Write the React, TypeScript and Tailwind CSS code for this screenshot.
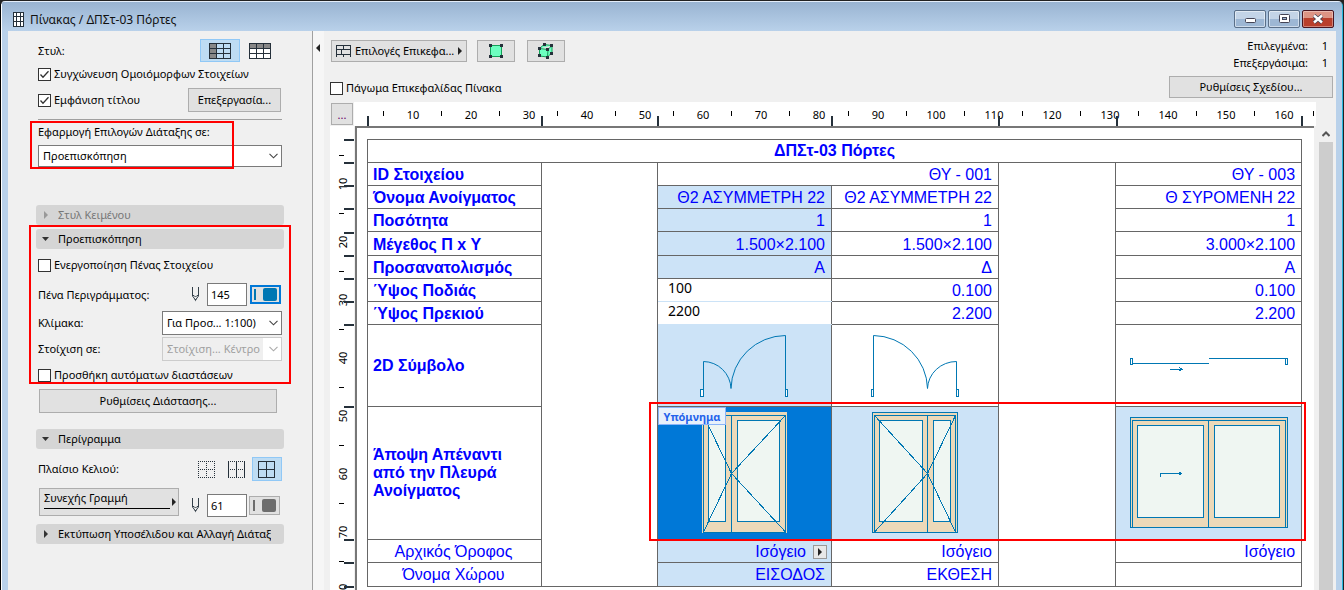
import React, { useState } from 'react';

const STROKE = '#0077b3';

const H_TICKS = [368, 542, 658, 832, 999, 1117, 1302];
const V_TICKS = [140, 163, 186, 209, 233, 256, 279, 302, 325, 407, 540, 563, 587];

const CheckBox: React.FC<{ label: string; initial?: boolean }> = ({ label, initial = false }) => {
  const [checked, setChecked] = useState(initial);
  return (
    <label className="flex items-center gap-[3px] whitespace-nowrap">
      <span className="grid size-[13px] shrink-0">
        <input
          type="checkbox"
          checked={checked}
          onChange={() => setChecked(!checked)}
          className="peer [grid-area:1/1] appearance-none size-[13px] border border-[#333] bg-white"
        />
        <svg viewBox="0 0 13 13" className="[grid-area:1/1] size-[13px] pointer-events-none invisible peer-checked:visible">
          <path d="M2.5 6.5 L5 9.2 L10.5 3.2" fill="none" stroke="#333" strokeWidth="1.3" />
        </svg>
      </span>
      {label}
    </label>
  );
};

const DropDown: React.FC<{ id: string; value: string; className: string; disabled?: boolean }> = ({ id, value, className, disabled }) => (
  <div className={`grid ${className}`}>
    <select
      id={id}
      disabled={disabled}
      className="[grid-area:1/1] appearance-none w-full h-full border border-[#7a7a7a] bg-white pl-1 pr-5 text-black disabled:border-[#ccc] disabled:bg-[linear-gradient(90deg,#efefef_100px,#fff_100px)] disabled:text-[#a0a0a0] disabled:opacity-100"
    >
      <option>{value}</option>
    </select>
    <svg viewBox="0 0 9 6" className="[grid-area:1/1] w-[9px] h-1.5 mr-1 self-center justify-self-end pointer-events-none">
      <path d="M0.5 0.8 L4.5 4.8 L8.5 0.8" fill="none" stroke={disabled ? '#aaa' : '#444'} strokeWidth="1.1" />
    </svg>
  </div>
);

const SectionHeader: React.FC<{ title: string; open?: boolean; disabled?: boolean }> = ({ title, open, disabled }) => (
  <button
    disabled={disabled}
    className="flex items-center w-full h-5 pl-1.5 pr-3 rounded-[3px] bg-[#d5d5d5] text-left disabled:text-[#777]"
  >
    <svg viewBox="0 0 8 8" className="size-2 shrink-0 mr-2">
      <path d={open ? 'M0 2 H7 L3.5 6 Z' : 'M2 0 L6 4 L2 8 Z'} fill={disabled ? '#999' : '#333'} />
    </svg>
    <span className="overflow-hidden whitespace-nowrap">{title}</span>
  </button>
);

const PenIcon = () => (
  <svg viewBox="0 0 9 15" className="w-[9px] h-[15px] mr-[7px]">
    <path d="M1.5 0 V9 L4.5 13 L7.5 9 V0 M1.5 8.5 H3 L4.5 10 L6 8.5 H7.5" fill="none" stroke="#333f48" />
    <path d="M3.5 12 H5.5 L4.5 14.5 Z" fill="#333f48" />
  </svg>
);

const StyleIcon: React.FC<{ left?: boolean }> = ({ left }) => (
  <svg viewBox="0 0 22 16" className="w-[22px] h-4" shapeRendering="crispEdges">
    <rect x="0.5" y="0.5" width="21" height="15" fill={left ? 'none' : '#fff'} />
    {left ? <rect width="7" height="16" fill="#888" /> : <rect width="22" height="5" fill="#888" />}
    <path d="M0.5 0.5 H21.5 V15.5 H0.5 Z M7.5 0 V16 M14.5 0 V16 M0 5.5 H22 M0 10.5 H22" fill="none" stroke="#25303a" />
  </svg>
);

const FrameIcon: React.FC<{ kind: 'none' | 'vertical' | 'full' }> = ({ kind }) => (
  <svg viewBox="0 0 17 17" className="size-[17px]" shapeRendering="crispEdges" fill="none" stroke="#25303a">
    <path
      d="M0 0.5 H17 M0 8.5 H17 M0 16.5 H17"
      strokeDasharray={kind === 'full' ? undefined : '1 1'}
    />
    <path d="M0.5 0 V17 M8.5 0 V17 M16.5 0 V17" strokeDasharray={kind === 'none' ? '1 1' : undefined} />
  </svg>
);

const Swatch: React.FC<{ color: string }> = ({ color }) => (
  <svg viewBox="0 0 23 13" className="w-[23px] h-[13px]">
    <rect x="0" y="1" width="2" height="11" fill={color} />
    <rect x="9" y="0" width="14" height="13" rx="2" fill={color} />
  </svg>
);

const Sidebar = () => (
  <aside className="w-[305px] shrink-0 border-r border-[#a0a0a0] px-7 pt-2">
    <div className="px-0.5">
      <div className="flex items-center h-[23px]">
        <span className="mr-auto">Στυλ:</span>
        <button aria-label="Κεφαλίδα αριστερά" className="w-10 h-[23px] grid place-items-center border border-[#90c8f6] bg-[#bedcf3]">
          <StyleIcon left />
        </button>
        <button aria-label="Κεφαλίδα επάνω" className="w-10 h-[23px] mr-0.5 grid place-items-center">
          <StyleIcon />
        </button>
      </div>
      <div className="flex items-center h-6">
        <CheckBox label="Συγχώνευση Ομοιόμορφων Στοιχείων" initial />
      </div>
      <div className="flex items-center justify-between h-7 pr-px">
        <CheckBox label="Εμφάνιση τίτλου" initial />
        <button className="w-[93px] h-6 border border-[#adadad] bg-[#e1e1e1]">Επεξεργασία...</button>
      </div>
      <hr className="mt-[5px] border-[#a0a0a0]" />
      <div className="relative">
        <label htmlFor="apply" className="flex items-center h-[25px] pb-0.5">Εφαρμογή Επιλογών Διάταξης σε:</label>
        <DropDown id="apply" value="Προεπισκόπηση" className="h-[22px]" />
        <div className="absolute -left-2 top-px w-[204px] h-12 border-2 border-[#f00] pointer-events-none" />
      </div>
    </div>

    <div className="mt-[38px]">
      <SectionHeader title="Στυλ Κειμένου" disabled />
    </div>
    <div className="relative mt-1">
      <SectionHeader title="Προεπισκόπηση" open />
      <div className="px-0.5">
        <div className="flex items-center h-8">
          <CheckBox label="Ενεργοποίηση Πένας Στοιχείου" />
        </div>
        <div className="flex items-center h-[27px] pr-px">
          <label htmlFor="pen" className="mr-auto">Πένα Περιγράμματος:</label>
          <PenIcon />
          <input id="pen" defaultValue="145" className="w-10 h-[23px] mr-[3px] pl-[3px] border border-[#7a7a7a] bg-white" />
          <button aria-label="Χρώμα πένας" className="w-[31px] h-[19px] grid place-items-center border-2 border-[#0078d7] bg-[#e1e1e1]">
            <Swatch color="#0077b3" />
          </button>
        </div>
        <div className="flex items-center justify-between h-[29px]">
          <label htmlFor="scale">Κλίμακα:</label>
          <DropDown id="scale" value="Για Προσ... 1:100)" className="w-[120px] h-6" />
        </div>
        <div className="flex items-center justify-between h-6">
          <label htmlFor="align">Στοίχιση σε:</label>
          <DropDown id="align" value="Στοίχιση... Κέντρο" className="w-[120px] h-6" disabled />
        </div>
        <div className="flex items-center h-7">
          <CheckBox label="Προσθήκη αυτόματων διαστάσεων" />
        </div>
      </div>
      <div className="absolute -left-[7px] -top-1 w-[262px] h-[159px] border-2 border-[#f00] pointer-events-none" />
    </div>
    <button className="block ml-[3px] w-[238px] h-6 border border-[#adadad] bg-[#e1e1e1]">Ρυθμίσεις Διάστασης...</button>

    <div className="mt-4">
      <SectionHeader title="Περίγραμμα" open />
    </div>
    <div className="flex items-center h-6 mt-2 px-0.5">
      <span className="mr-auto">Πλαίσιο Κελιού:</span>
      <button aria-label="Χωρίς πλαίσιο" className="w-[30px] h-6 pr-px grid place-items-center"><FrameIcon kind="none" /></button>
      <button aria-label="Κάθετο πλαίσιο" className="w-[30px] h-6 pr-px grid place-items-center"><FrameIcon kind="vertical" /></button>
      <button aria-label="Πλήρες πλαίσιο" className="w-[30px] h-6 pr-px grid place-items-center border border-[#90c8f6] bg-[#bedcf3]"><FrameIcon kind="full" /></button>
    </div>
    <div className="flex items-end h-[29px] mt-[7px] mb-[7px] pl-[3px] pr-1">
      <button className="flex items-center self-start w-[140px] h-7 mr-auto pl-1 pr-0.5 border border-[#adadad] bg-[#e1e1e1]">
        <span className="flex-1 border-b border-black text-left h-[18px] mb-[5px] leading-[14px]">Συνεχής Γραμμή</span>
        <svg viewBox="0 0 4 8" className="w-1 h-2 ml-0.5"><path d="M0 0 L4 4 L0 8 Z" fill="#222" /></svg>
      </button>
      <div className="flex items-center">
        <PenIcon />
        <input aria-label="Πένα πλαισίου" defaultValue="61" className="w-10 h-[23px] mr-0.5 pl-[3px] border border-[#7a7a7a] bg-white" />
        <button aria-label="Χρώμα πλαισίου" className="w-[31px] h-[19px] grid place-items-center border border-[#adadad] bg-[#e1e1e1]">
          <Swatch color="#6d6d6d" />
        </button>
      </div>
    </div>
    <SectionHeader title="Εκτύπωση Υποσέλιδου και Αλλαγή Διάταξ" />
  </aside>
);

const Toolbar = () => (
  <div className="flex justify-between h-[71px] pl-1.5 pr-[3px]">
    <div className="pt-[9px]">
      <div className="flex gap-2.5 pl-px">
        <button className="flex items-center w-[136px] h-[22px] px-1 gap-1 border border-[#adadad] bg-[#e1e1e1] whitespace-nowrap">
          <svg viewBox="0 0 15 12" className="w-[15px] h-3 shrink-0" shapeRendering="crispEdges">
            <path d="M0.5 12 V0.5 H14.5 V12 M0 4.5 H15 M0 9.5 H15 M7.5 0 V4 M5.5 4 V9 M7.5 9 V12" fill="none" stroke="#25303a" />
          </svg>
          Επιλογές Επικεφα...
          <svg viewBox="0 0 4 8" className="w-1 h-2 shrink-0 ml-auto"><path d="M0 0 L4 4 L0 8 Z" fill="#222" /></svg>
        </button>
        <button aria-label="Επιλογή σε κάτοψη" className="w-[38px] h-[22px] grid place-items-center border border-[#adadad] bg-[#e1e1e1]">
          <svg viewBox="0 0 14 14" className="size-3.5">
            <rect x="1.5" y="1.5" width="11" height="11" fill="#6dffc0" stroke="#12a058" />
            <path d="M0 0h3v3h-3z M11 0h3v3h-3z M0 11h3v3h-3z M11 11h3v3h-3z" fill="#25303a" />
          </svg>
        </button>
        <button aria-label="Επιλογή σε 3D" className="w-[38px] h-[22px] ml-0.5 grid place-items-center border border-[#adadad] bg-[#e1e1e1]">
          <svg viewBox="0 0 16 16" className="size-4">
            <path d="M1.5 5.5 L6 1.5 L14 2.5 L14 9.5 L9.5 14 L1.5 13 Z M1.5 5.5 L10 6.5 L14 2.5 M10 6.5 L9.5 14" fill="#6dffc0" stroke="#12a058" />
            <path d="M0 4h3v3h-3z M5 0h3v3h-3z M12 1h3v3h-3z M8 5h3v3h-3z M12 9h3v3h-3z M0 11h3v3h-3z M8 13h3v3h-3z" fill="#25303a" />
          </svg>
        </button>
      </div>
      <div className="flex items-center h-4 mt-[18px]">
        <CheckBox label="Πάγωμα Επικεφαλίδας Πίνακα" />
      </div>
    </div>
    <div className="flex flex-col items-end pt-1.5">
      <dl className="grid grid-cols-[auto_20px] text-right leading-[17px] pr-[5px]">
        <dt>Επιλεγμένα:</dt>
        <dd>1</dd>
        <dt>Επεξεργάσιμα:</dt>
        <dd>1</dd>
      </dl>
      <button className="w-[164px] h-[22px] mt-[5px] border border-[#adadad] bg-[#e1e1e1]">Ρυθμίσεις Σχεδίου...</button>
    </div>
  </div>
);

const HorizontalRuler = () => (
  <svg className="block w-full h-6 bg-white" shapeRendering="crispEdges">
    {Array.from({ length: 17 }, (_, i) => (
      <rect key={i} x={29 + i * 58 + Math.floor(i / 8)} y="9" width="1" height="5" fill="#000" />
    ))}
    {Array.from({ length: 16 }, (_, i) => (
      <text key={i} x={59 + i * 58 + Math.floor(i / 8)} y="17" textAnchor="middle" fontSize="11">{(i + 1) * 10}</text>
    ))}
    {H_TICKS.map(x => (
      <rect key={x} x={x - 355} y="14" width="2" height="10" fill="#25303a" />
    ))}
  </svg>
);

const VerticalRuler = () => (
  <svg className="block w-6 flex-1 bg-white" shapeRendering="crispEdges">
    {Array.from({ length: 8 }, (_, i) => (
      <rect key={i} x="9" y={29 + i * 58} width="5" height="1" fill="#000" />
    ))}
    {Array.from({ length: 8 }, (_, i) => (
      <text key={i} transform={`translate(17 ${58 + i * 58}) rotate(-90)`} textAnchor="middle" fontSize="11">{(i + 1) * 10}</text>
    ))}
    {V_TICKS.map(y => (
      <rect key={y} x="14" y={y - 127} width="10" height="2" fill="#25303a" />
    ))}
  </svg>
);

const DoorSymbol = () => (
  <svg viewBox="658 325 173 81" className="block w-[173px] h-[81px]" fill="none" stroke={STROKE}>
    <path d="M703.5 389 V361.5 A28 28 0 0 1 731 388.5 A55 54 0 0 1 785.5 335.5 V389" />
    <path d="M700.5 389.5 H703.5 V396.5 H700.5 Z M785.5 389.5 H787.5 V396.5 H785.5 Z" fill="#fff" shapeRendering="crispEdges" />
  </svg>
);

const DoorSymbolMirrored = () => (
  <svg viewBox="832 325 166 81" className="block w-[166px] h-[81px]" fill="none" stroke={STROKE}>
    <path d="M873.5 389 V335.5 A55 54 0 0 1 927.5 388.5 A29 28 0 0 1 956.5 361.5 V389" />
    <path d="M871.5 389.5 H873.5 V396.5 H871.5 Z M956.5 389.5 H958.5 V396.5 H956.5 Z" shapeRendering="crispEdges" />
  </svg>
);

const SlidingSymbol = () => (
  <svg viewBox="1116 325 185 81" className="block w-[185px] h-[81px]" fill="none" stroke={STROKE} shapeRendering="crispEdges">
    <path d="M1130.5 358.5 H1132.5 V364.5 H1130.5 Z M1133 363.5 H1209 M1209 358.5 H1287 M1285.5 358.5 H1287.5 V364.5 H1285.5 Z M1170 369.5 H1182" />
    <path d="M1179 367 L1182 369.5 L1179 371" />
  </svg>
);

const DoorElevation = () => (
  <svg viewBox="658 407 173 132" className="block w-[173px] h-[132px]" fill="none" stroke={STROKE} shapeRendering="crispEdges">
    <rect x="702" y="412" width="85" height="121" fill="#ecd9b9" stroke="none" />
    <path d="M703.5 415.5 H785.5 V532.5 H703.5 Z" />
    <rect x="708.5" y="420.5" width="17" height="101" fill="#eff6f2" />
    <rect x="737.5" y="420.5" width="42" height="101" fill="#eff6f2" />
    <path d="M731.5 415 V532 M703.5 415.5 L731.5 473.5 L703.5 532 M785.5 415.5 L731.5 473.5 L785.5 532" />
  </svg>
);

const DoorElevationMirrored = () => (
  <svg viewBox="832 407 166 132" className="block w-[166px] h-[132px]" fill="none" stroke={STROKE} shapeRendering="crispEdges">
    <rect x="872.5" y="412.5" width="85" height="120" fill="#ecd9b9" />
    <path d="M874.5 532 V415.5 H955.5 V532" />
    <rect x="879.5" y="420.5" width="43" height="101" fill="#eff6f2" />
    <rect x="933.5" y="420.5" width="17" height="101" fill="#eff6f2" />
    <path d="M927.5 415 V532 M874.5 415.5 L927.5 473.5 L874.5 532 M955.5 415.5 L927.5 473.5 L955.5 532" />
  </svg>
);

const SlidingElevation = () => (
  <svg viewBox="1116 407 185 132" className="block w-[185px] h-[132px]" fill="none" stroke={STROKE} shapeRendering="crispEdges">
    <rect x="1130.5" y="417.5" width="157" height="110" fill="#ecd9b9" />
    <path d="M1132.5 527 V420.5 H1285.5 V527 M1208.5 420 V527" />
    <rect x="1137.5" y="425.5" width="66" height="92" fill="#eff6f2" />
    <rect x="1214.5" y="425.5" width="65" height="92" fill="#eff6f2" />
    <path d="M1160.5 477 V473.5 H1182 M1179.5 472 V475 M1180.5 472 V475" />
  </svg>
);

const DATA_ROWS = [
  { label: 'Όνομα Ανοίγματος', values: ['Θ2 ΑΣΥΜΜΕΤΡΗ 22', 'Θ2 ΑΣΥΜΜΕΤΡΗ 22', 'Θ ΣΥΡΟΜΕΝΗ 22'] },
  { label: 'Ποσότητα', values: ['1', '1', '1'] },
  { label: 'Μέγεθος Π x Υ', values: ['1.500×2.100', '1.500×2.100', '3.000×2.100'], tall: true },
  { label: 'Προσανατολισμός', values: ['Α', 'Δ', 'Α'] },
];

const EDIT_ROWS = [
  { label: 'Ύψος Ποδιάς', edit: '100', values: ['0.100', '0.100'] },
  { label: 'Ύψος Πρεκιού', edit: '2200', values: ['2.200', '2.200'] },
];

const HEAD = 'border border-[#666] p-0 pl-[5px] text-left font-bold';
const ROW_HEAD = 'border border-[#666] p-0 pl-[5px] pt-0.5 text-left font-bold';
const CELL = 'border border-[#666] p-0 pr-1.5 pt-0.5 text-right';

const Schedule = () => (
  <table className="table-fixed border-collapse w-[935px] text-[16px] leading-[18px] text-[#00f] font-['Liberation_Sans',Arial,sans-serif]">
    <colgroup>
      <col className="w-[174px]" />
      <col className="w-[116px]" />
      <col className="w-[174px]" />
      <col className="w-[167px]" />
      <col className="w-[117px]" />
      <col className="w-[186px]" />
    </colgroup>
    <tbody>
      <tr className="h-[23px]">
        <th colSpan={6} className="border border-[#666] p-0 text-center font-bold">ΔΠΣτ-03 Πόρτες</th>
      </tr>
      <tr className="h-[23px]">
        <th scope="row" className={ROW_HEAD}>ID Στοιχείου</th>
        <td rowSpan={11} className="border border-[#666] p-0" />
        <td colSpan={2} className={CELL}>ΘΥ - 001</td>
        <td rowSpan={11} className="border border-[#666] p-0" />
        <td className={CELL}>ΘΥ - 003</td>
      </tr>
      {DATA_ROWS.map(row => (
        <tr key={row.label} className={row.tall ? 'h-6' : 'h-[23px]'}>
          <th scope="row" className={ROW_HEAD}>{row.label}</th>
          <td className={`${CELL} bg-[#cce3f7]`}>{row.values[0]}</td>
          <td className={CELL}>{row.values[1]}</td>
          <td className={CELL}>{row.values[2]}</td>
        </tr>
      ))}
      {EDIT_ROWS.map(row => (
        <tr key={row.label} className="h-[23px]">
          <th scope="row" className={ROW_HEAD}>{row.label}</th>
          <td className="border border-[#666] border-b-[#cce3f7] p-0">
            <input
              aria-label={row.label}
              defaultValue={row.edit}
              className="block w-full h-[22px] pl-2.5 pb-1.5 bg-white text-[14px] text-black font-['Noto_Sans',sans-serif]"
            />
          </td>
          <td className={CELL}>{row.values[0]}</td>
          <td className={CELL}>{row.values[1]}</td>
        </tr>
      ))}
      <tr className="h-[82px]">
        <th scope="row" className={HEAD}>2D Σύμβολο</th>
        <td className="border border-[#666] p-0 bg-[#cce3f7]"><DoorSymbol /></td>
        <td className="border border-[#666] p-0"><DoorSymbolMirrored /></td>
        <td className="border border-[#666] p-0"><SlidingSymbol /></td>
      </tr>
      <tr className="h-[133px]">
        <th scope="row" className={`${HEAD} pr-5`}>Άποψη Απέναντι από την Πλευρά Ανοίγματος</th>
        <td className="relative border border-[#666] p-0 bg-[#0078d7]">
          <DoorElevation />
          <span className="absolute left-0 top-0 w-[68px] h-[18px] grid place-items-center border border-[#8ab4f8] bg-[#e8f1fb] text-[11px] leading-none font-bold text-[#2563eb] font-['Noto_Sans',sans-serif]">
            Υπόμνημα
          </span>
        </td>
        <td className="border border-[#666] p-0 bg-[#cce3f7]"><DoorElevationMirrored /></td>
        <td className="border border-[#666] p-0 bg-[#cce3f7]"><SlidingElevation /></td>
      </tr>
      <tr className="h-[23px]">
        <th scope="row" className="border border-[#666] p-0 pt-0.5 pr-0.5 text-center font-normal">Αρχικός Όροφος</th>
        <td className="border border-[#666] p-0 pt-0.5 bg-[#cce3f7]">
          <div className="flex items-center justify-end gap-[7px] pr-1">
            Ισόγειο
            <button aria-label="Επιλογή ορόφου" className="size-3.5 grid place-items-center border border-[#999] bg-[#e8e8e8]">
              <svg viewBox="0 0 4 8" className="w-1 h-2"><path d="M0 0 L4 4 L0 8 Z" fill="#222" /></svg>
            </button>
          </div>
        </td>
        <td className={CELL}>Ισόγειο</td>
        <td className={CELL}>Ισόγειο</td>
      </tr>
      <tr className="h-6">
        <th scope="row" className="border border-[#666] p-0 pr-0.5 text-center font-normal">Όνομα Χώρου</th>
        <td className="border border-[#666] p-0 pr-1.5 text-right bg-[#cce3f7]">ΕΙΣΟΔΟΣ</td>
        <td className="border border-[#666] p-0 pr-1.5 text-right">ΕΚΘΕΣΗ</td>
        <td className="border border-[#666] p-0" />
      </tr>
    </tbody>
  </table>
);

const Workspace = () => (
  <div className="flex flex-1 min-h-0 pl-1.5">
    <div className="flex flex-col w-6 shrink-0">
      <button className="w-[22px] h-[22px] ml-px mt-px mb-px border border-[#adadad] bg-[#e1e1e1] text-[#606] leading-none">...</button>
      <VerticalRuler />
    </div>
    <div className="flex flex-col flex-1 min-w-0">
      <HorizontalRuler />
      <div className="relative flex-1 overflow-hidden ml-px mr-0.5 pl-2.5 pt-[11px] border-l-2 border-t-2 border-[#777] bg-white">
        <Schedule />
        {/* highlight around the elevation previews */}
        <div className="absolute left-[292px] top-[274px] w-[657px] h-[139px] border-2 border-[#f00] pointer-events-none" />
      </div>
    </div>
    <div className="flex flex-col w-5 pl-[3px] pr-[3px] pt-6">
      <button aria-label="Κύλιση επάνω" className="h-4 grid place-items-center">
        <svg viewBox="0 0 8 6" className="w-2 h-1.5"><path d="M0.5 5 L4 1.5 L7.5 5" fill="none" stroke="#555" strokeWidth="2" /></svg>
      </button>
      <div className="flex-1 bg-[#cdcdcd]" />
    </div>
  </div>
);

const CAPTION_BUTTON = 'w-8 h-[18px] grid place-items-center rounded-[2px] border border-[#5a6f88] bg-linear-to-b from-[#c3d4e7] from-50% to-[#9db7d4] to-50% shadow-[inset_0_0_0_1px_rgba(255,255,255,0.5)]';

const TitleBar = () => (
  <header className="flex items-center h-[29px] pl-[11px] pr-2 bg-linear-to-b from-[#99b4d2] to-[#b9d1ea]">
    <svg viewBox="0 0 11 15" className="w-[11px] h-[15px] mt-1.5" shapeRendering="crispEdges">
      <rect width="11" height="15" fill="#fff" />
      <path d="M0.5 0.5 H10.5 V14.5 H0.5 Z M3.5 0 V15 M7.5 0 V15 M0 4.5 H11 M0 9.5 H11" fill="none" stroke="#25303a" />
    </svg>
    <h1 className="ml-1.5 mt-1.5 text-[12px] text-[#111]">Πίνακας / ΔΠΣτ-03 Πόρτες</h1>
    <div className="flex gap-0.5 ml-auto mt-1">
      <button aria-label="Ελαχιστοποίηση" className={CAPTION_BUTTON}>
        <svg viewBox="0 0 11 5" className="w-[11px] h-[5px] mt-1"><rect x="0.5" y="0.5" width="10" height="4" rx="1" fill="#fff" stroke="#445" /></svg>
      </button>
      <button aria-label="Μεγιστοποίηση" className={CAPTION_BUTTON}>
        <svg viewBox="0 0 11 9" className="w-[11px] h-[9px]">
          <rect x="0.5" y="0.5" width="10" height="8" rx="1" fill="#fff" stroke="#445" />
          <rect x="3.5" y="3.5" width="4" height="2" fill="#9db7d4" stroke="#445" />
        </svg>
      </button>
      <button aria-label="Κλείσιμο" className="w-8 h-[18px] grid place-items-center rounded-[2px] border border-[#4a1520] bg-linear-to-b from-[#dd9484] from-45% to-[#b93f2c] to-45% shadow-[inset_0_0_0_1px_rgba(255,255,255,0.35)]">
        <svg viewBox="0 0 12 10" className="w-3 h-2.5">
          <path d="M2 1.5 L10 8.5 M10 1.5 L2 8.5" stroke="#445" strokeWidth="4" />
          <path d="M2 1.5 L10 8.5 M10 1.5 L2 8.5" stroke="#fff" strokeWidth="2.4" />
        </svg>
      </button>
    </div>
  </header>
);

const App: React.FC = () => {
  return (
    <div className="h-screen bg-[#222] pt-px text-[11px] leading-4 text-black font-['Noto_Sans','Open_Sans',sans-serif]">
      <div className="flex flex-col h-full overflow-hidden rounded-t-[5px] border-l border-r border-t border-l-black border-r-[#27b7dd] border-t-[#e4eefa] mr-px">
        <div className="flex flex-col flex-1 min-h-0 bg-[#b9d1ea] border-l border-l-white">
          <TitleBar />
          <div className="flex flex-1 min-h-0 ml-1.5 mr-1.5 bg-[#f0f0f0]">
            <Sidebar />
            <div className="w-[11px] shrink-0 bg-[#f6f6f6] pt-[13px]">
              <button aria-label="Σύμπτυξη πλευρικής στήλης" className="block ml-[3px]">
                <svg viewBox="0 0 4 8" className="w-1 h-2"><path d="M4 0 L0 4 L4 8 Z" fill="#222" /></svg>
              </button>
            </div>
            <main className="flex flex-col flex-1 min-w-0">
              <Toolbar />
              <Workspace />
            </main>
          </div>
        </div>
      </div>
    </div>
  );
};

export default App;
